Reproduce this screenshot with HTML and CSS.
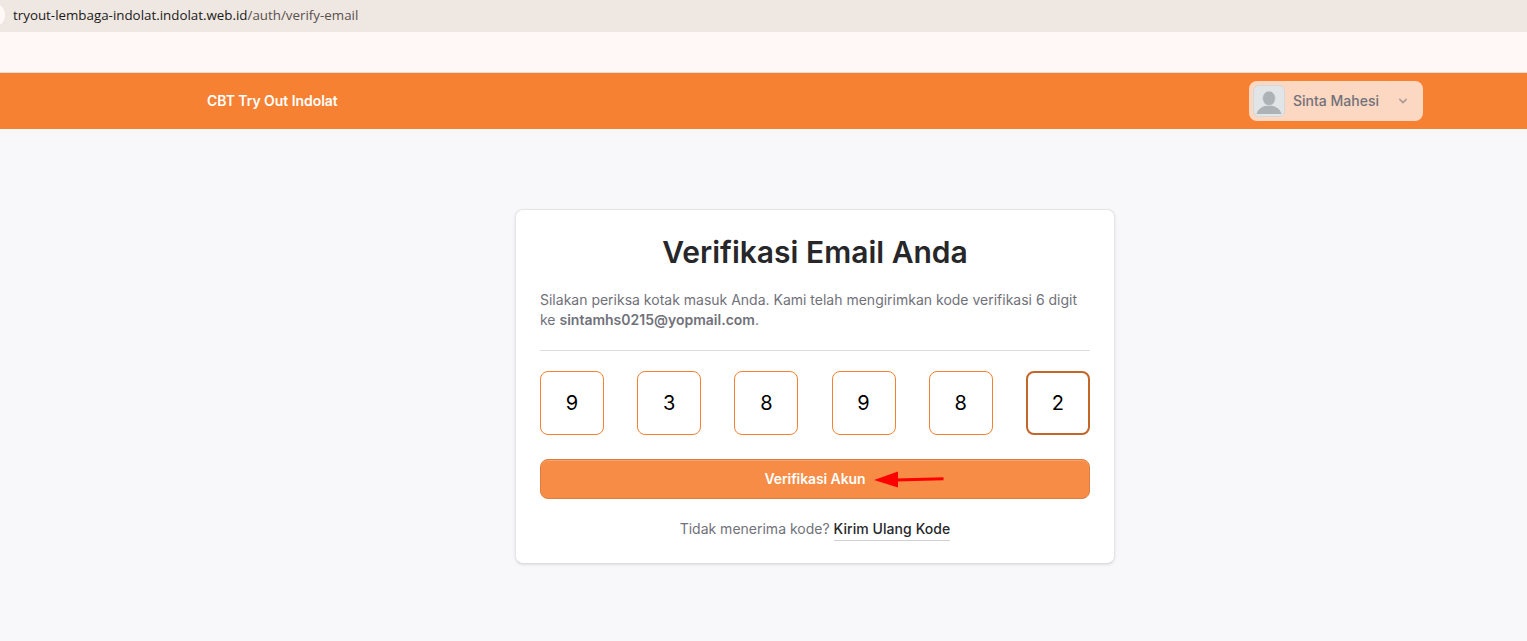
FILE: index.html
```html
<!DOCTYPE html>
<html lang="id">
<head>
  <meta charset="utf-8">
  <title>Verifikasi Email Anda</title>
  <link rel="stylesheet" href="styles.css">
</head>
<body>
  <div class="address-bar">
    <span class="address-icon"></span>
    <span class="address-url"><span class="address-host">tryout-lembaga-indolat.indolat.web.id</span>/auth/verify-email</span>
  </div>
  <div class="bookmarks-bar"></div>

  <header class="navbar">
    <div class="navbar-inner">
      <a class="brand">CBT Try Out Indolat</a>
      <button class="user-menu" type="button">
        <span class="avatar">
          <svg width="30" height="30" viewBox="0 0 30 30">
            <path d="M2.5 28C4 22.5 9 19.5 15 19.5S26 22.5 27.5 28Z" fill="#acb2b6"/>
            <ellipse cx="15" cy="12.3" rx="6.4" ry="7.3" fill="#acb2b6" stroke="#e2e5e7" stroke-width=".6"/>
          </svg>
        </span>
        <span class="user-name">Sinta Mahesi</span>
        <svg class="chevron" width="10" height="8" viewBox="0 0 10 8">
          <path d="M1.8 2.4 5 5.6 8.2 2.4" fill="none" stroke="#a89a96" stroke-width="1.5" stroke-linecap="round" stroke-linejoin="round"/>
        </svg>
      </button>
    </div>
  </header>

  <main class="content">
    <form class="card">
      <h1>Verifikasi Email Anda</h1>
      <p class="description">Silakan periksa kotak masuk Anda. Kami telah mengirimkan kode verifikasi 6 digit ke <strong>sintamhs0215@yopmail.com</strong>.</p>
      <hr>
      <div class="code">
        <div class="digit">9</div>
        <div class="digit">3</div>
        <div class="digit">8</div>
        <div class="digit">9</div>
        <div class="digit">8</div>
        <div class="digit active">2</div>
      </div>
      <button class="submit" type="button">
        <span>Verifikasi Akun</span>
        <svg class="arrow" width="71" height="18" viewBox="0 0 71 18">
          <path d="M22 10 69.5 8.8" stroke="#ff0000" stroke-width="3"/>
          <path d="M0 10 24 1.5V17.5Z" fill="#ff0000"/>
        </svg>
      </button>
      <div class="resend">Tidak menerima kode? <a>Kirim Ulang Kode</a></div>
    </form>
  </main>
</body>
</html>
```

FILE: styles.css
```css
* {
  box-sizing: border-box;
}
body {
  margin: 0;
  height: 641px;
  overflow: hidden;
  background: #f8f8fa;
  color: #71717a;
  font-family: Inter, sans-serif;
  font-size: 14px;
  line-height: 20px;
}
.address-bar {
  display: flex;
  align-items: center;
  height: 32px;
  background: #efe7e2;
  color: #5a514d;
  font-family: "Open Sans", "Noto Sans", sans-serif;
  font-size: 13.35px;
}
.address-icon {
  width: 24px;
  height: 24px;
  margin: 0 8px 2px -19px;
  border-radius: 50%;
  background: #fff8f6;
}
.address-url {
  padding-bottom: 2px;
}
.address-host {
  color: #201a18;
}
.bookmarks-bar {
  height: 41px;
  background: #fff8f6;
  border-bottom: 1px solid #e8ddd7;
}
.navbar {
  height: 56px;
  padding-left: 207px;
  background: #f78132;
}
.navbar-inner {
  display: flex;
  align-items: center;
  justify-content: space-between;
  width: 1216px;
  height: 56px;
}
.brand {
  color: #fff;
  font-weight: 600;
  letter-spacing: -0.05px;
}
.user-menu {
  display: flex;
  align-items: center;
  width: 174px;
  height: 40px;
  padding: 0 15px 0 4px;
  border: none;
  border-radius: 8px;
  background: #fcd7c1;
  color: #71717a;
  font: 500 14px/20px Inter, sans-serif;
}
.avatar {
  width: 32px;
  height: 32px;
  border: 1px solid #d3d9db;
  border-radius: 6px;
  background: #e2e5e7;
  overflow: hidden;
}
.avatar svg {
  display: block;
}
.user-name {
  margin-left: 8px;
}
.chevron {
  margin-left: auto;
}
.content {
  padding: 80px 0 0 515px;
}
.card {
  width: 600px;
  height: 355px;
  padding: 24px;
  border: 1px solid #e5e5e8;
  border-bottom-color: #dcdcdf;
  border-radius: 8px;
  background: #fff;
  box-shadow: 0 1px 3px rgba(0, 0, 0, 0.1);
}
h1 {
  margin: 0 0 20px;
  color: #27272a;
  font-size: 30px;
  font-weight: 600;
  line-height: 36px;
  text-align: center;
}
.description {
  margin: 0 0 20px;
}
.description strong {
  font-weight: 600;
}
hr {
  height: 1px;
  margin: 0 0 20px;
  border: none;
  background: #dedee0;
}
.code {
  display: flex;
  justify-content: space-between;
  margin-bottom: 24px;
}
.digit {
  display: flex;
  align-items: center;
  justify-content: center;
  width: 64px;
  height: 64px;
  border: 1px solid #f78132;
  border-radius: 8px;
  color: #000;
  font-size: 20px;
}
.digit.active {
  border: 2px solid #c2662a;
}
.submit {
  position: relative;
  display: block;
  width: 100%;
  height: 40px;
  margin-bottom: 20px;
  padding: 0;
  border: 1px solid #db7e40;
  border-radius: 8px;
  background: #f68c46;
  box-shadow: inset 0 1px 0 #f8a36b;
  color: #fff;
  font: 600 14px/20px Inter, sans-serif;
  letter-spacing: -0.1px;
}
/* pointer drawn over the button */
.arrow {
  position: absolute;
  top: 10px;
  left: 333px;
}
.resend {
  text-align: center;
}
.resend a {
  display: inline-block;
  padding-bottom: 1px;
  border-bottom: 1px solid #d0d0d3;
  color: #27272a;
  font-weight: 500;
  letter-spacing: 0.07px;
}
```
